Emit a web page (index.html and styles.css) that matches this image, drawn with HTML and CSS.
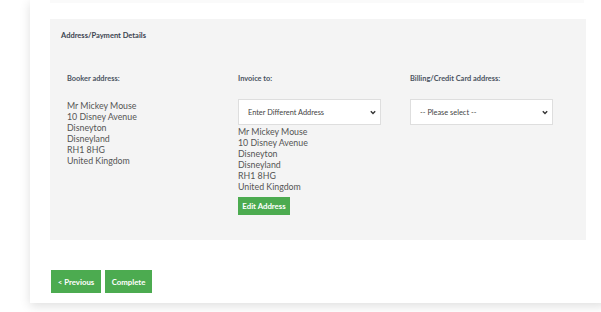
FILE: index.html
```html
<!DOCTYPE html>
<html>
<head>
<meta charset="utf-8">
<link rel="stylesheet" href="styles.css">
</head>
<body>
<div class="page">
  <div class="card">
    <div class="prev-panel"></div>
    <section class="panel">
      <h2 class="panel-title">Address/Payment Details</h2>
      <div class="cols">
        <div class="col">
          <h3 class="col-head">Booker address:</h3>
          <div class="address">Mr Mickey Mouse<br>10 Disney Avenue<br>Disneyton<br>Disneyland<br>RH1 8HG<br>United Kingdom</div>
        </div>
        <div class="col">
          <h3 class="col-head">Invoice to:</h3>
          <div class="select-wrap">
            <select class="select"><option>Enter Different Address</option></select>
            <svg class="chev" width="6" height="5" viewBox="0 0 6 5"><path d="M0.8 1.2 L3 3.4 L5.2 1.2" fill="none" stroke="#333" stroke-width="1.4"/></svg>
          </div>
          <div class="address tight">Mr Mickey Mouse<br>10 Disney Avenue<br>Disneyton<br>Disneyland<br>RH1 8HG<br>United Kingdom</div>
          <button class="btn btn-small">Edit Address</button>
        </div>
        <div class="col">
          <h3 class="col-head">Billing/Credit Card address:</h3>
          <div class="select-wrap">
            <select class="select"><option>-- Please select --</option></select>
            <svg class="chev" width="6" height="5" viewBox="0 0 6 5"><path d="M0.8 1.2 L3 3.4 L5.2 1.2" fill="none" stroke="#333" stroke-width="1.4"/></svg>
          </div>
        </div>
      </div>
    </section>
    <div class="actions">
      <button class="btn btn-large">&lt; Previous</button>
      <button class="btn btn-large">Complete</button>
    </div>
  </div>
</div>
</body>
</html>
```
FILE: styles.css
```css
html, body {
  margin: 0;
  padding: 0;
  background: #ffffff;
}
body {
  font-family: Lato, "Open Sans", sans-serif;
  color: #555;
  overflow: hidden;
  width: 601px;
  height: 312px;
}
.page {
  width: 601px;
  height: 312px;
  overflow: hidden;
  padding-left: 30px;
  box-sizing: border-box;
}
.card {
  width: 536px;
  background: #fff;
  box-shadow: 0 3px 10px rgba(0, 0, 0, 0.13);
  padding: 0 20px 10px 20px;
  box-sizing: content-box;
}
.prev-panel {
  height: 3px;
  width: 534px;
  background: #fafafa;
}
.panel {
  margin-top: 16px;
  width: 536px;
  height: 221px;
  box-sizing: border-box;
  background: #f4f4f4;
  padding: 12px 0 0 11px;
}
.panel-title {
  margin: 0;
  font-size: 7.5px;
  line-height: 10px;
  font-weight: 700;
  color: #3b4450;
}
.cols {
  display: grid;
  grid-template-columns: 171px 172px 171px;
  margin-top: 33px;
  padding-left: 6px;
}
.col-head {
  margin: 0 0 15.5px 0;
  font-size: 7.4px;
  line-height: 10px;
  font-weight: 700;
  color: #4a5361;
}
.address {
  font-size: 8.8px;
  line-height: 11px;
  color: #555;
}
.address.tight {
  margin-top: 1px;
}
.select-wrap {
  position: relative;
  width: 143px;
  height: 26px;
  margin-top: -1px;
}
.select {
  appearance: none;
  -webkit-appearance: none;
  width: 143px;
  height: 26px;
  margin: 0;
  border: 1px solid #dedede;
  border-radius: 0;
  background: #fff;
  font-family: Lato, "Open Sans", sans-serif;
  font-size: 7.4px;
  color: #444;
  padding: 0 0 0 9px;
  box-sizing: border-box;
}
.chev {
  position: absolute;
  right: 5px;
  top: 11px;
}
.btn {
  display: block;
  border: 0;
  border-radius: 0;
  background: #4cab50;
  color: #fff;
  font-family: Lato, "Open Sans", sans-serif;
  font-weight: 700;
  font-size: 7.8px;
  padding: 0;
  cursor: pointer;
}
.btn-small {
  margin-top: 5.5px;
  width: 52px;
  height: 18px;
}
.actions {
  display: flex;
  gap: 4px;
  margin-top: 30px;
  padding-left: 1px;
}
.btn-large {
  height: 23px;
}
.actions .btn-large:first-child {
  width: 50px;
}
.actions .btn-large:last-child {
  width: 47px;
}
```
